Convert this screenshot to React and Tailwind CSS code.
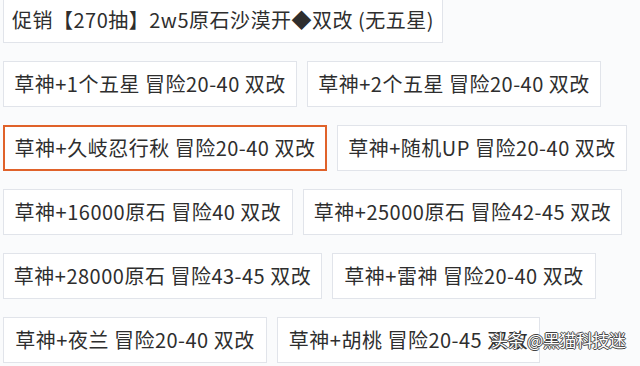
import React from "react";

const rows = [
  [{ t: "促销【270抽】2w5原石沙漠开◆双改 (无五星)", w: "w-[440px]" }],
  [
    { t: "草神+1个五星 冒险20-40 双改", w: "w-[294px]" },
    { t: "草神+2个五星 冒险20-40 双改", w: "w-[294px]" },
  ],
  [
    { t: "草神+久岐忍行秋 冒险20-40 双改", w: "w-[324px]", active: true },
    { t: "草神+随机UP 冒险20-40 双改", w: "w-[290px]" },
  ],
  [
    { t: "草神+16000原石 冒险40 双改", w: "w-[290px]" },
    { t: "草神+25000原石 冒险42-45 双改", w: "w-[319px]" },
  ],
  [
    { t: "草神+28000原石 冒险43-45 双改", w: "w-[319px]" },
    { t: "草神+雷神 冒险20-40 双改", w: "w-[264px]" },
  ],
  [
    { t: "草神+夜兰 冒险20-40 双改", w: "w-[264px]" },
    { t: "草神+胡桃 冒险20-45 双改", w: "w-[263px]" },
  ],
];

export default function App() {
  return (
    <div
      className="relative w-[640px] h-[366px] overflow-hidden bg-[#fafbfc]"
      style={{ fontFamily: '"Noto Sans CJK SC", "Noto Sans", sans-serif' }}
    >
      <div className="flex flex-col gap-[18px] pl-[3px] mt-[-3px]">
        {rows.map((row, i) => (
          <div key={i} className="flex gap-[10px]">
            {row.map((b, j) => (
              <div
                key={j}
                className={`${b.w} h-[46px] flex items-center justify-center bg-white text-[20px] tracking-[0.5px] text-[#2e2e2e] whitespace-nowrap ${
                  b.active
                    ? "border-2 border-[#e0622a]"
                    : "border border-[#e1e4ea]"
                }`}
              >
                {b.t}
              </div>
            ))}
          </div>
        ))}
      </div>
      <div
        className="absolute left-[491px] top-[330px] text-[17px] leading-[20px] text-white whitespace-nowrap tracking-[-0.5px]"
        style={{
          textShadow:
            "1px 0 0 #444, -1px 0 0 #444, 0 1px 0 #444, 0 -1px 0 #444",
        }}
      >
        头条 @黑猫科技迷
      </div>
    </div>
  );
}
